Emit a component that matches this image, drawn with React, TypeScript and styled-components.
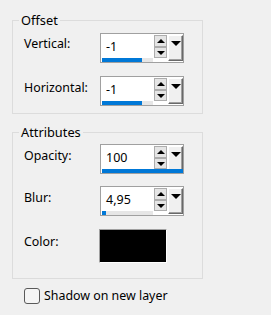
import React from "react";
import styled, { createGlobalStyle } from "styled-components";

const Global = createGlobalStyle`
  html, body { margin: 0; padding: 0; background: #f0f0f0; }
  body { font-family: "Noto Sans", "Open Sans", sans-serif; font-size: 12.4px; color: #000; }
`;

const Page = styled.div`
  width: 271px;
  height: 315px;
  padding: 13px 0 0 12px;
  box-sizing: border-box;
  display: flex;
  flex-direction: column;
  align-items: flex-start;
`;

const Group = styled.fieldset<{ $pt: number; $pb: number; $gap: number }>`
  box-sizing: border-box;
  width: 191px;
  margin: 0 0 11px 0;
  padding: ${(p) => p.$pt}px 0 ${(p) => p.$pb}px 11px;
  border: 1px solid #dcdcdc;
  display: flex;
  flex-direction: column;
  gap: ${(p) => p.$gap}px;
  min-width: 0;
`;

const Legend = styled.legend`
  padding: 0 2px;
  margin-left: -5px;
  line-height: 14px;
  font-size: 12.8px;
`;

const Row = styled.div<{ $mt?: number }>`
  display: flex;
  align-items: flex-start;
  margin-top: ${(p) => p.$mt ?? 0}px;
`;

const Label = styled.div<{ $top: number }>`
  width: 76px;
  line-height: 16px;
  padding-top: ${(p) => p.$top}px;
`;

const SpinBox = styled.div`
  position: relative;
  box-sizing: border-box;
  width: 84px;
  height: 30px;
  border: 1px solid #a0a0a0;
  background: #fff;
  display: flex;
  align-items: flex-start;
`;

const ValueText = styled.div`
  width: 52px;
  height: 24px;
  box-sizing: border-box;
  padding: 5px 0 0 5px;
  font-size: 12.5px;
  line-height: 16px;
`;

const SpinButtons = styled.div`
  margin: 1px 0 0 1px;
  width: 13px;
  display: flex;
  flex-direction: column;
`;

const SpinBtn = styled.div<{ $h: number }>`
  box-sizing: border-box;
  height: ${(p) => p.$h}px;
  border: 1px solid #adadad;
  background: #e5e5e5;
  display: flex;
  align-items: center;
  justify-content: center;
`;

const DropBtn = styled.div`
  box-sizing: border-box;
  margin: 1px 0 0 1px;
  width: 15px;
  height: 26px;
  background: #f0f0f0;
  border-top: 1px solid #fff;
  border-left: 1px solid #fff;
  border-right: 1px solid #696969;
  border-bottom: 1px solid #696969;
  box-shadow: inset -1px -1px 0 #a0a0a0;
  display: flex;
  justify-content: center;
  padding-top: 5px;
`;

const Tri = styled.div<{ $dir: "up" | "down"; $w: number }>`
  width: 0;
  height: 0;
  border-left: ${(p) => p.$w / 2}px solid transparent;
  border-right: ${(p) => p.$w / 2}px solid transparent;
  ${(p) =>
    p.$dir === "up"
      ? `border-bottom: ${Math.ceil(p.$w / 2)}px solid #000;`
      : `border-top: ${Math.ceil(p.$w / 2)}px solid #000;`}
`;

const Bar = styled.div`
  position: absolute;
  left: 1px;
  bottom: 0;
  height: 4px;
  width: 81px;
`;

const Track = styled.div`
  position: absolute;
  left: 0;
  top: 0;
  width: 51px;
  height: 4px;
  background: #e6e6e6;
`;

const Fill = styled.div`
  position: absolute;
  left: 0;
  top: 0;
  height: 4px;
  background: #0078d7;
`;

const Swatch = styled.div<{ $color: string }>`
  box-sizing: border-box;
  margin-left: -1px;
  width: 68px;
  height: 34px;
  background: ${(p) => p.$color};
  border-top: 1px solid #a0a0a0;
  border-left: 1px solid #a0a0a0;
  border-right: 1px solid #fff;
  border-bottom: 1px solid #fff;
`;

const CheckRow = styled.label`
  display: flex;
  align-items: center;
  margin: -2px 0 0 12px;
  gap: 4px;
  line-height: 16px;
`;

const CheckBox = styled.span`
  box-sizing: border-box;
  width: 16px;
  height: 16px;
  border: 1px solid #5a5a5a;
  border-radius: 3px;
  background: #f5f5f5;
`;

function Spin({ value, frac }: { value: string; frac: number }) {
  return (
    <SpinBox>
      <ValueText>{value}</ValueText>
      <SpinButtons>
        <SpinBtn $h={12}>
          <Tri $dir="up" $w={8} />
        </SpinBtn>
        <SpinBtn $h={11}>
          <Tri $dir="down" $w={8} />
        </SpinBtn>
      </SpinButtons>
      <DropBtn>
        <Tri $dir="down" $w={10} />
      </DropBtn>
      <Bar>
        <Track />
        <Fill style={{ width: Math.round(81 * frac) }} />
      </Bar>
    </SpinBox>
  );
}

export default function App() {
  return (
    <>
      <Global />
      <Page>
        <Group $pt={6} $pb={7} $gap={13}>
          <Legend>Offset</Legend>
          <Row>
            <Label $top={3}>Vertical:</Label>
            <Spin value="-1" frac={99 / 200} />
          </Row>
          <Row>
            <Label $top={4}>Horizontal:</Label>
            <Spin value="-1" frac={99 / 200} />
          </Row>
        </Group>
        <Group $pt={5} $pb={15} $gap={12}>
          <Legend>Attributes</Legend>
          <Row>
            <Label $top={4}>Opacity:</Label>
            <Spin value="100" frac={1} />
          </Row>
          <Row>
            <Label $top={4}>Blur:</Label>
            <Spin value="4,95" frac={4.95 / 100} />
          </Row>
          <Row $mt={1}>
            <Label $top={5}>Color:</Label>
            <Swatch $color="#000" />
          </Row>
        </Group>
        <CheckRow>
          <CheckBox />
          Shadow on new layer
        </CheckRow>
      </Page>
    </>
  );
}
